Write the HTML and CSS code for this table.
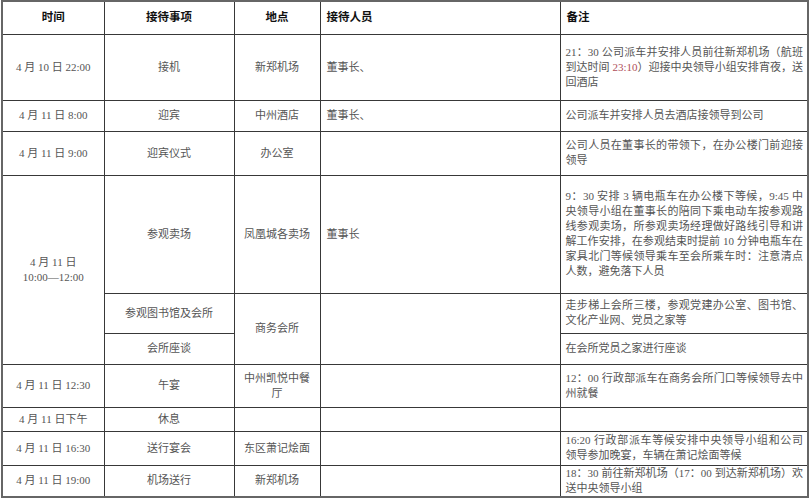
FILE: index.html
```html
<!DOCTYPE html>
<html lang="zh-CN">
<head>
<meta charset="utf-8">
<title>接待安排</title>
<link rel="stylesheet" href="styles.css">
</head>
<body>
<table class="sched">
  <colgroup>
    <col class="c1"><col class="c2"><col class="c3"><col class="c4"><col class="c5">
  </colgroup>
  <thead>
    <tr class="h-head">
      <th class="ctr">时间</th>
      <th class="ctr">接待事项</th>
      <th class="ctr">地点</th>
      <th class="lft">接待人员</th>
      <th class="lft">备注</th>
    </tr>
  </thead>
  <tbody>
    <tr class="h-r1">
      <td class="ctr">4 月 10 日 22:00</td>
      <td class="ctr">接机</td>
      <td class="ctr">新郑机场</td>
      <td class="lft">董事长、</td>
      <td class="note lh-a">
        <span class="j">21：30 公司派车并安排人员前往新郑机场（航班</span>
        <span class="j">到达时间 <span class="red">23:10</span>）迎接中央领导小组安排宵夜，送</span>
        <span class="l">回酒店</span>
      </td>
    </tr>
    <tr class="h-r2">
      <td class="ctr">4 月 11 日 8:00</td>
      <td class="ctr">迎宾</td>
      <td class="ctr">中州酒店</td>
      <td class="lft">董事长、</td>
      <td class="note"><span class="l">公司派车并安排人员去酒店接领导到公司</span></td>
    </tr>
    <tr class="h-r3">
      <td class="ctr">4 月 11 日 9:00</td>
      <td class="ctr">迎宾仪式</td>
      <td class="ctr">办公室</td>
      <td class="lft"></td>
      <td class="note lh-b">
        <span class="j">公司人员在董事长的带领下，在办公楼门前迎接</span>
        <span class="l">领导</span>
      </td>
    </tr>
    <tr class="h-r4a">
      <td class="ctr lh-b" rowspan="3">4 月 11 日<br>10:00—12:00</td>
      <td class="ctr">参观卖场</td>
      <td class="ctr">凤凰城各卖场</td>
      <td class="lft">董事长</td>
      <td class="note lh-c">
        <span class="j">9：30 安排 3 辆电瓶车在办公楼下等候，9:45 中</span>
        <span class="j">央领导小组在董事长的陪同下乘电动车按参观路</span>
        <span class="j">线参观卖场，所参观卖场经理做好路线引导和讲</span>
        <span class="j">解工作安排，在参观结束时提前 10 分钟电瓶车在</span>
        <span class="j">家具北门等候领导乘车至会所乘车时：注意清点</span>
        <span class="l">人数，避免落下人员</span>
      </td>
    </tr>
    <tr class="h-r4b">
      <td class="ctr">参观图书馆及会所</td>
      <td class="ctr" rowspan="2">商务会所</td>
      <td class="lft" rowspan="2"></td>
      <td class="note lh-b">
        <span class="j">走步梯上会所三楼，参观党建办公室、图书馆、</span>
        <span class="l">文化产业网、党员之家等</span>
      </td>
    </tr>
    <tr class="h-r4c">
      <td class="ctr">会所座谈</td>
      <td class="note"><span class="l">在会所党员之家进行座谈</span></td>
    </tr>
    <tr class="h-r5">
      <td class="ctr">4 月 11 日 12:30</td>
      <td class="ctr">午宴</td>
      <td class="ctr lh-b">中州凯悦中餐厅</td>
      <td class="lft"></td>
      <td class="note">
        <span class="j">12：00 行政部派车在商务会所门口等候领导去中</span>
        <span class="l">州就餐</span>
      </td>
    </tr>
    <tr class="h-r6">
      <td class="ctr">4 月 11 日下午</td>
      <td class="ctr">休息</td>
      <td class="ctr"></td>
      <td class="lft"></td>
      <td class="note"></td>
    </tr>
    <tr class="h-r7">
      <td class="ctr">4 月 11 日 16:30</td>
      <td class="ctr">送行宴会</td>
      <td class="ctr">东区萧记烩面</td>
      <td class="lft"></td>
      <td class="note">
        <span class="j">16:20 行政部派车等候安排中央领导小组和公司</span>
        <span class="l">领导参加晚宴，车辆在萧记烩面等候</span>
      </td>
    </tr>
    <tr class="h-r8">
      <td class="ctr">4 月 11 日 19:00</td>
      <td class="ctr">机场送行</td>
      <td class="ctr">新郑机场</td>
      <td class="lft"></td>
      <td class="note">
        <span class="j">18：30 前往新郑机场（17：00 到达新郑机场）欢</span>
        <span class="l">送中央领导小组</span>
      </td>
    </tr>
  </tbody>
</table>
</body>
</html>
```

FILE: styles.css
```css
html, body {
  margin: 0;
  padding: 0;
  background: #ffffff;
}

body {
  font-family: "Liberation Serif", "Noto Sans CJK SC", serif;
  font-size: 11px;
  color: #555555;
}

.sched {
  margin: 0 0 0 1px;
  width: 806px;
  table-layout: fixed;
  border-collapse: collapse;
  border: 2px solid #666666;
}

.c1 { width: 102px; }
.c2 { width: 130px; }
.c3 { width: 86px; }
.c4 { width: 240px; }
.c5 { width: 248px; }

.sched th,
.sched td {
  border: 1px solid #383838;
  padding: 0 6px;
  vertical-align: middle;
  line-height: 15px;
  overflow: hidden;
}

.sched th {
  font-weight: bold;
  color: #111111;
  font-size: 11.5px;
}

.ctr { text-align: center; }
.lft { text-align: left; }

.note {
  text-align: left;
}

.sched td.note {
  padding: 0 4px 0 5px;
}

.j {
  display: block;
  white-space: nowrap;
  text-align: justify;
  text-align-last: justify;
}

.l {
  display: block;
  white-space: nowrap;
}

.red { color: #b0505a; }

.lh-a { line-height: 19.5px; }
.lh-b { line-height: 16.7px; }
.lh-c { line-height: 17.6px; }

.h-head { height: 33px; }
.h-r1 { height: 66px; }
.h-r2 { height: 31px; }
.h-r3 { height: 44px; }
.h-r4a { height: 118px; }
.h-r4b { height: 40px; }
.h-r4c { height: 31px; }
.h-r5 { height: 43px; }
.h-r6 { height: 24px; }
.h-r7 { height: 34px; }
.h-r8 { height: 32px; }
```
